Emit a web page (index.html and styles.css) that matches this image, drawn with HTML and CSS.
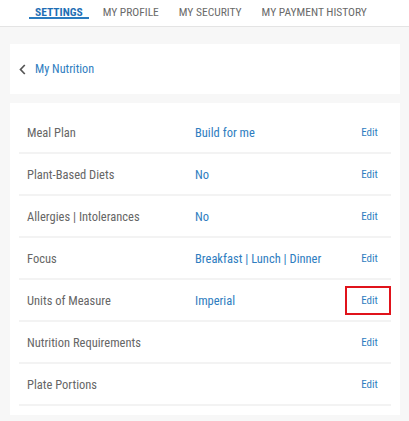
FILE: index.html
```html
<!DOCTYPE html>
<html lang="en">
<head>
<meta charset="utf-8">
<title>My Nutrition</title>
<link rel="stylesheet" href="styles.css">
</head>
<body>
<header class="tabs">
  <a class="tab active">SETTINGS</a>
  <a class="tab">MY PROFILE</a>
  <a class="tab">MY SECURITY</a>
  <a class="tab">MY PAYMENT HISTORY</a>
</header>
<main class="content">
  <section class="card nav-card">
    <svg class="chev" width="7" height="11" viewBox="0 0 7 11"><path d="M5.8 1 L1.5 5.5 L5.8 10" fill="none" stroke="#555" stroke-width="1.7"/></svg>
    <span class="nav-title">My Nutrition</span>
  </section>
  <section class="card list-card">
    <div class="row"><span class="label">Meal Plan</span><span class="value">Build for me</span><span class="edit">Edit</span></div>
    <div class="row"><span class="label">Plant-Based Diets</span><span class="value">No</span><span class="edit">Edit</span></div>
    <div class="row"><span class="label">Allergies | Intolerances</span><span class="value">No</span><span class="edit">Edit</span></div>
    <div class="row"><span class="label">Focus</span><span class="value">Breakfast | Lunch | Dinner</span><span class="edit">Edit</span></div>
    <div class="row"><span class="label">Units of Measure</span><span class="value">Imperial</span><span class="edit highlight">Edit</span></div>
    <div class="row"><span class="label">Nutrition Requirements</span><span class="value"></span><span class="edit">Edit</span></div>
    <div class="row"><span class="label">Plate Portions</span><span class="value"></span><span class="edit">Edit</span></div>
  </section>
</main>
</body>
</html>
```

FILE: styles.css
```css
* { box-sizing: border-box; }
html, body { margin: 0; padding: 0; }
body {
  background: #f7f7f7;
  font-family: "Roboto Condensed", "Roboto", "Liberation Sans", sans-serif;
  font-stretch: 85%;
  color: #666;
  height: 421px;
  overflow: hidden;
}
.tabs {
  background: #fff;
  height: 27px;
  border-bottom: 1px solid #e4e4e4;
  display: flex;
  gap: 8px;
  padding-left: 29px;
}
.tab {
  font-size: 11.5px;
  color: #6a6a6a;
  padding: 5px 6px 0;
  height: 19px;
  white-space: nowrap;
  flex-shrink: 0;
}
.tab.active {
  color: #1f6fb5;
  font-weight: bold;
  border-bottom: 2px solid #2a7bbf;
}
.content {
  padding: 17px 9px 0 10px;
  display: flex;
  flex-direction: column;
  gap: 9px;
}
.card { background: #fff; }
.nav-card {
  height: 50px;
  display: flex;
  align-items: center;
  padding-left: 9px;
  gap: 9px;
}
.chev { display: block; }
.nav-title {
  font-size: 12.2px;
  color: #2e7dc0;
}
.list-card {
  padding: 9px 9px 9px 9px;
}
.row {
  display: grid;
  grid-template-columns: 168px 1fr 46px;
  align-items: center;
  height: 42px;
  padding-left: 8px;
  border-bottom: 2px solid #f3f3f3;
}
.label { font-size: 12.5px; color: #666; white-space: nowrap; }
.value { font-size: 12.5px; color: #2e7dc0; white-space: nowrap; }
.edit {
  font-size: 11px;
  color: #2e7dc0;
  height: 29px;
  display: flex;
  align-items: center;
  justify-content: center;
  padding-left: 3px;
  padding-top: 1px;
  border: 2px solid transparent;
}
.edit.highlight { border-color: #e0131b; }
```
